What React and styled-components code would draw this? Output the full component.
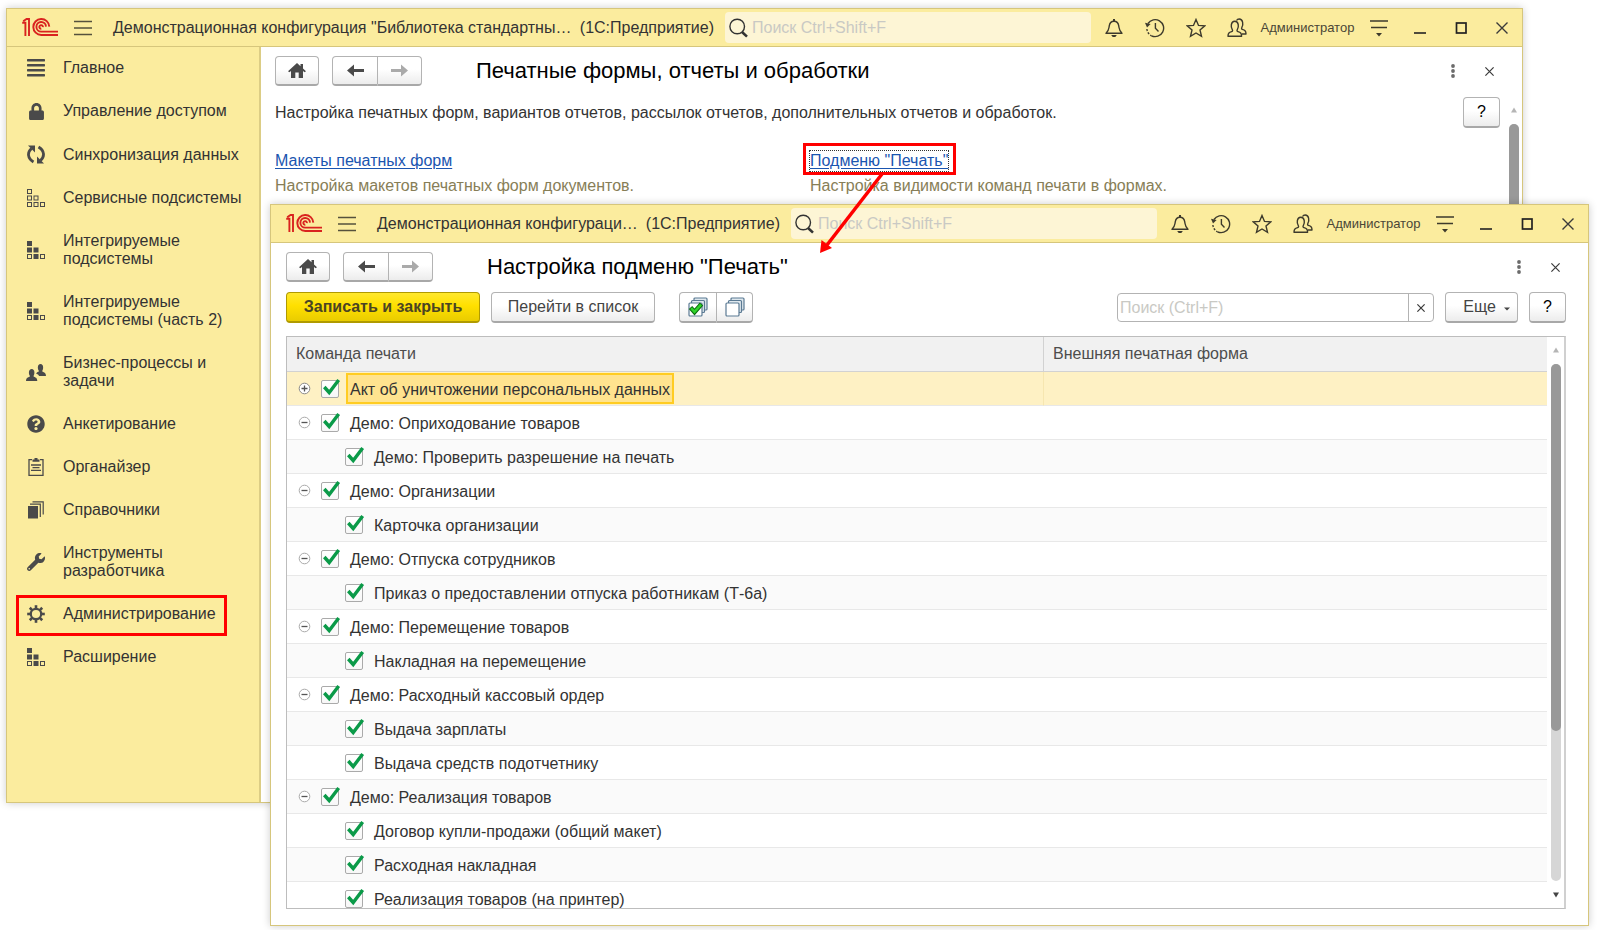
import { useState } from "react";
import styled, { createGlobalStyle } from "styled-components";
import { FaLock, FaWrench, FaQuestionCircle } from "react-icons/fa";

const GlobalStyle = createGlobalStyle`
  * {
    box-sizing: border-box;
  }
  body {
    margin: 0;
    background: #fff;
    color: #333;
    font-family: "Liberation Sans", Arial, sans-serif;
    font-size: 16px;
  }
  button, input {
    font: inherit;
    color: inherit;
  }
  svg {
    flex: none;
  }
`;

const Desktop = styled.div`
  position: relative;
  min-height: 100vh;
  overflow: hidden;
`;

const Window = styled.section`
  position: absolute;
  top: ${(props) => props.$top}px;
  right: ${(props) => props.$right}px;
  bottom: ${(props) => props.$bottom}px;
  left: ${(props) => props.$left}px;
  display: flex;
  flex-direction: column;
  background: #fff;
  border: 1px solid #d6c67c;
  box-shadow: 0 0 8px rgba(0, 0, 0, 0.2);
`;

const TitleBar = styled.header`
  display: flex;
  flex: none;
  align-items: center;
  height: 38px;
  padding-left: 15px;
  background: #fbec9e;
  border-bottom: 1px solid #d6c67c;
`;

const MenuButton = styled.button`
  display: flex;
  margin-left: 16px;
  padding: 0;
  background: none;
  border: none;
  cursor: pointer;
`;

const Caption = styled.div`
  display: flex;
  flex: 1;
  justify-content: space-between;
  gap: 6px;
  min-width: 0;
  padding: 0 11px 0 21px;
  white-space: nowrap;
`;

const GlobalSearch = styled.label`
  display: flex;
  flex: none;
  align-items: center;
  gap: 4px;
  width: 366px;
  height: 31px;
  margin-right: 2px;
  padding: 0 4px;
  background: #fdf5d5;
  border-radius: 4px;
`;

const SearchInput = styled.input`
  flex: 1;
  min-width: 0;
  padding: 0;
  background: none;
  border: none;
  outline: none;
  &::placeholder {
    color: #c9c9c4;
    opacity: 1;
  }
`;

const BarButton = styled.button`
  display: flex;
  flex: none;
  align-items: center;
  justify-content: center;
  width: 41px;
  height: 36px;
  padding: 0;
  background: none;
  border: none;
  cursor: pointer;
`;

const UserName = styled.span`
  width: 101px;
  text-align: center;
  font-size: 13px;
  color: #4a4636;
`;

const Body = styled.div`
  display: flex;
  flex: 1;
  min-height: 0;
`;

const Sidebar = styled.nav`
  flex: none;
  width: 254px;
  background: #fbec9e;
  border-right: 2px solid #dccd85;
`;

const SidebarItem = styled.a`
  position: relative;
  display: flex;
  align-items: center;
  gap: 18px;
  padding: 12px 12px 13px 20px;
  line-height: 18px;
  color: #333;
  text-decoration: none;
  white-space: pre-line;
`;

const SidebarIcon = styled.span`
  display: flex;
  flex: none;
  justify-content: center;
  width: 18px;
  color: #4a4a4a;
`;

const SidebarMark = styled.span`
  position: absolute;
  top: 2px;
  left: 9px;
  width: 211px;
  height: 41px;
  border: 3px solid #f00;
`;

const Page = styled.main`
  display: flex;
  flex: 1;
  flex-direction: column;
  min-width: 0;
  min-height: 0;
  padding: 9px 0 0 ${(props) => props.$indent}px;
`;

const PageHead = styled.div`
  display: flex;
  flex: none;
  align-items: center;
  height: 30px;
  padding-right: 15px;
`;

const Button = styled.button`
  display: flex;
  flex: none;
  align-items: center;
  justify-content: center;
  width: ${(props) => props.$width}px;
  height: ${(props) => props.$height || 31}px;
  padding: 0;
  background: linear-gradient(#fff 45%, #ececec);
  border: 1px solid #b3b3b3;
  border-bottom: 2px solid #a8a8a8;
  border-radius: 4px;
  color: #444;
  cursor: pointer;
`;

const PrimaryButton = styled(Button)`
  background: linear-gradient(#ffe82e, #ffe000 45%, #e9cc00);
  border-color: #b09a00;
  font-weight: bold;
  color: #4a4424;
`;

const HelpButton = styled(Button)`
  color: #000;
`;

const ButtonGroup = styled.div`
  display: flex;
  flex: none;
  margin-left: ${(props) => props.$gap}px;

  ${Button}:first-child {
    border-right-width: 1px;
    border-radius: 4px 0 0 4px;
  }
  ${Button}:last-child {
    border-left: none;
    border-radius: 0 4px 4px 0;
  }
`;

const PageTitle = styled.h1`
  flex: 1;
  margin: 0 0 0 54px;
  font-size: 22px;
  font-weight: normal;
  color: #000;
`;

const PlainButton = styled.button`
  display: flex;
  align-items: center;
  justify-content: center;
  width: 36px;
  height: 30px;
  padding: 0;
  background: none;
  border: none;
  cursor: pointer;
`;

const SettingsArea = styled.div`
  display: flex;
  flex: 1;
  gap: 5px;
  min-height: 0;
  padding-top: 11px;
`;

const Settings = styled.div`
  flex: 1;
`;

const Intro = styled.p`
  margin: 0;
  line-height: 32px;
`;

const SettingsGrid = styled.div`
  display: grid;
  grid-template-columns: 535px 1fr;
  margin-top: 22px;
`;

const Hint = styled.p`
  margin: 5px 0 0;
  line-height: 20px;
  color: #877e57;
`;

const SettingsLink = styled.a`
  display: inline-block;
  line-height: 20px;
  color: #1a55b0;
  text-decoration: underline;
  text-underline-offset: 2px;
  outline: ${(props) => (props.$focused ? "1px dotted #333" : "none")};
`;

const ScrollBar = styled.div`
  display: flex;
  flex: none;
  flex-direction: column;
  align-items: center;
  width: 17px;
  padding: 10px 0;
`;

const Track = styled.div`
  display: flex;
  flex: 1;
  width: 10px;
  margin: 11px 0;
  background: #d6d6d6;
  border-radius: 5px;
`;

const Thumb = styled.div`
  width: 10px;
  height: ${(props) => props.$size};
  background: #999;
  border-radius: 5px;
`;

const FormArea = styled.div`
  display: flex;
  flex: 1;
  flex-direction: column;
  min-height: 0;
  padding: 10px 22px 16px 0;
`;

const CommandBar = styled.div`
  display: flex;
  flex: none;
  align-items: center;
  gap: 11px;
  margin-bottom: 13px;
`;

const Spacer = styled.div`
  flex: 1;
`;

const ListSearch = styled.div`
  display: flex;
  width: 317px;
  height: 29px;
  padding-left: 2px;
  border: 1px solid #b3b3b3;
  border-radius: 4px;
`;

const ClearButton = styled.button`
  display: flex;
  align-items: center;
  justify-content: center;
  width: 25px;
  padding: 0;
  background: none;
  border: none;
  border-left: 1px solid #b3b3b3;
  cursor: pointer;
`;

const MoreText = styled.span`
  margin: 0 8px 0 10px;
`;

const TableFrame = styled.div`
  display: flex;
  flex: 1;
  min-height: 0;
  border: 1px solid #bdbdbd;
  border-right: 2px solid #d0d0d0;
`;

const TableView = styled.div`
  flex: 1;
  overflow: hidden;
`;

const Table = styled.table`
  width: 100%;
  border-spacing: 0;
  table-layout: fixed;
`;

const HeadCell = styled.th`
  width: ${(props) => props.$width};
  height: 35px;
  padding: 0 0 0 9px;
  background: #f1f1f1;
  border-bottom: 1px solid #d2d2d2;
  border-left: ${(props) => (props.$divided ? "1px solid #d2d2d2" : "none")};
  font-weight: normal;
  text-align: left;
  color: #4d4d4d;
`;

const Row = styled.tr`
  background: ${(props) => (props.$selected ? "#fef1c4" : "#fff")};
  &:nth-child(odd) {
    background: ${(props) => (props.$selected ? "#fef1c4" : "#fafafa")};
  }
`;

const Cell = styled.td`
  height: 34px;
  padding: 0;
  border-bottom: 1px solid #e8e8e8;
  border-left: ${(props) => (props.$divided ? "1px solid #f6e6b0" : "none")};
`;

const TreeLine = styled.div`
  display: flex;
  align-items: center;
  padding-left: ${(props) => (props.$child ? 58 : 11)}px;
`;

const ExpandButton = styled.button`
  display: flex;
  margin-right: 10px;
  padding: 0;
  background: none;
  border: none;
  cursor: pointer;
`;

const CheckLabel = styled.label`
  display: flex;
  align-items: center;
  gap: 7px;
`;

const CheckBoxWrap = styled.span`
  position: relative;
  display: flex;
  width: 18px;
  height: 18px;
`;

const CheckBox = styled.input`
  appearance: none;
  width: 18px;
  height: 18px;
  margin: 0;
  background: linear-gradient(#fff, #f7f7f7);
  border: 1px solid #aaa;
  border-radius: 2px;
`;

const CheckMark = styled.svg`
  position: absolute;
  top: -2px;
  left: 1px;
  pointer-events: none;
`;

const CommandName = styled.span`
  height: 31px;
  padding: 0 2px;
  line-height: 29px;
  background: ${(props) => (props.$selected ? "#ffe38f" : "transparent")};
  border: 2px solid ${(props) => (props.$selected ? "#fc2" : "transparent")};
`;

const Pointer = styled.svg`
  position: absolute;
  top: 143px;
  left: 803px;
  pointer-events: none;
`;

const Logo = () => (
    <svg width="36" height="19" viewBox="0 0 36 19" fill="none" stroke="#d9231f" strokeWidth="1.9">
        <path d="M0.2 4.7H3.4V18M1.2 3.3L4.6 1H7V18" />
        <path d="M27.3 8.6A8 8 0 1 0 19.3 17H36" />
        <path d="M24 8.6A4.8 4.8 0 1 0 19.3 13.6H36" />
        <path d="M20.9 9.2A1.8 1.8 0 1 0 19.3 10.7" />
    </svg>
);

const BurgerIcon = () => (
    <svg width="18" height="16" viewBox="0 0 18 16" stroke="#55513c" strokeWidth="1.3">
        <path d="M0 1.5H18M0 8H18M0 14.5H18" />
    </svg>
);

const SearchIcon = () => (
    <svg width="19" height="20" viewBox="0 0 19 20" fill="none" stroke="#333">
        <circle cx="8.2" cy="8.5" r="7.3" strokeWidth="1.4" />
        <path d="M13 14L18 18.6" strokeWidth="2.6" />
    </svg>
);

const BellIcon = () => (
    <svg width="18" height="20" viewBox="0 0 18 20" fill="none" stroke="#3d3a2c" strokeWidth="1.4">
        <path d="M1 15.2H17C14 12.8 14.3 11 13.7 7.6C13.2 4.6 11.5 3.2 9 3.2S4.8 4.6 4.3 7.6C3.7 11 4 12.8 1 15.2Z" strokeLinejoin="round" />
        <path d="M9 3V1" strokeWidth="2" />
        <path d="M6.2 17H11.8L10.3 18.9H7.7Z" fill="#3d3a2c" stroke="none" />
    </svg>
);

const HistoryIcon = () => (
    <svg width="20" height="20" viewBox="0 0 20 20" fill="none" stroke="#3d3a2c" strokeWidth="1.4">
        <path d="M3 5.5A8.5 8.5 0 1 1 6.5 17.8" />
        <path d="M1.9 11A8.5 8.5 0 0 0 6.5 17.8" strokeDasharray="2 1.5" />
        <path d="M10.4 5V10.3L13.5 13.4" />
        <path d="M0 4.8L5.6 6L2 9.5Z" fill="#3d3a2c" stroke="none" />
    </svg>
);

const StarIcon = () => (
    <svg width="20" height="20" viewBox="0 0 20 20" fill="none" stroke="#3d3a2c" strokeWidth="1.4">
        <path d="M10 1.5L12.5 7.4L18.8 7.9L14 12L15.5 18.3L10 15L4.5 18.3L6 12L1.2 7.9L7.5 7.4Z" />
    </svg>
);

const UsersIcon = () => (
    <svg width="20" height="20" viewBox="0 0 20 20" fill="none" stroke="#3d3a2c" strokeWidth="1.4" strokeLinejoin="round">
        <path d="M1 18.2C1 14.5 2.5 14.3 5.2 13.4C5.9 12.7 5.6 12 5.2 11.4C3.8 9.5 3.5 3.2 7.8 3.2S11.8 9.5 10.4 11.4C10 12 9.7 12.7 10.4 13.4C13.1 14.3 14.6 14.5 14.6 18.2Z" />
        <path d="M9.5 2.5C10.2 1.3 11 1 12.2 1C16.2 1 16.3 6.5 15 9C14.5 10 14.2 10.7 14.9 11.3C17.5 12.2 19 12.5 19 16H15" />
    </svg>
);

const OptionsIcon = () => (
    <svg width="18" height="18" viewBox="0 0 18 18" stroke="#3d3a2c" strokeWidth="1.4">
        <path d="M0 2H18M1 8.5H17" />
        <path d="M6 14H12L9 17.5Z" fill="#3d3a2c" stroke="none" />
    </svg>
);

const MinimizeIcon = () => (
    <svg width="12" height="12" viewBox="0 0 12 12" stroke="#222" strokeWidth="1.6">
        <path d="M0 11H12" />
    </svg>
);

const MaximizeIcon = () => (
    <svg width="12" height="12" viewBox="0 0 12 12" fill="none" stroke="#222" strokeWidth="1.7">
        <rect x="1.5" y="1" width="9.5" height="10" />
    </svg>
);

const CrossIcon = ({ size = 12, width = 1.4 }) => (
    <svg width={size} height={size} viewBox="0 0 12 12" stroke="#3a3a3a" strokeWidth={width}>
        <path d="M0.5 0.5L11.5 11.5M11.5 0.5L0.5 11.5" />
    </svg>
);

const DotsIcon = () => (
    <svg width="4" height="14" viewBox="0 0 4 14" fill="#6b6b6b">
        <circle cx="2" cy="2" r="1.9" />
        <circle cx="2" cy="7" r="1.9" />
        <circle cx="2" cy="12" r="1.9" />
    </svg>
);

const HomeIcon = () => (
    <svg width="18" height="15" viewBox="0 0 18 15" fill="#4a4a4a">
        <path d="M9 0L12.5 3.2V1H15V5.5L18 8.3L16.6 9.2L15 8V15H10.7V9.5H7.3V15H3V8L1.4 9.2L0 8.3Z" />
    </svg>
);

const ArrowIcon = ({ right }) => (
    <svg width="17" height="13" viewBox="0 0 17 13" fill={right ? "#aaa" : "#4a4a4a"}>
        <path d={right ? "M17 6.5L10 0.5V4.9H0V8.1H10V12.5Z" : "M0 6.5L7 0.5V4.9H17V8.1H7V12.5Z"} />
    </svg>
);

const TriangleIcon = ({ down, color }) => (
    <svg width="6" height="6" viewBox="0 0 6 6" fill={color}>
        <path d={down ? "M0 0.5H6L3 5.5Z" : "M0 5.5H6L3 0.5Z"} />
    </svg>
);

const CaretIcon = () => (
    <svg width="6" height="8" viewBox="0 0 6 8" fill="#444">
        <path d="M0 4.5H6L3 7.5Z" />
    </svg>
);

const StackIcon = ({ checked }) => (
    <svg width="20" height="20" viewBox="0 0 20 20" fill="#dfe8ee" stroke="#5b7a93" strokeWidth="1.2">
        <rect x="6" y="1" width="13" height="12" rx="1" />
        <rect x="3.5" y="3.5" width="13" height="12" rx="1" />
        <rect x="1" y="6" width="13" height="13" rx="1" fill="#fff" />
        {checked && <path d="M2.5 10.5L6.5 15L13.5 7" fill="none" stroke="#0a6b10" strokeWidth="4.6" />}
        {checked && <path d="M3.1 11.1L6.5 14.8L13 7.6" fill="none" stroke="#2fd32a" strokeWidth="2.6" />}
    </svg>
);

const LinesIcon = () => (
    <svg width="18" height="18" viewBox="0 0 18 18" fill="#4a4a4a">
        <rect y="0" width="18" height="2.4" rx="0.6" />
        <rect y="5" width="18" height="2.4" rx="0.6" />
        <rect y="10" width="18" height="2.4" rx="0.6" />
        <rect y="15" width="18" height="2.4" rx="0.6" />
    </svg>
);

const SyncIcon = () => (
    <svg width="18" height="19" viewBox="0 0 18 19" fill="none" stroke="#4a4a4a" strokeWidth="2.8">
        <path d="M6.5 17C0.5 13.5 0 7.5 4.5 3.5" />
        <path d="M11.5 2C17.5 5.5 18 11.5 13.5 15.5" />
        <path d="M1 0.5H8V7.5Z" fill="#4a4a4a" stroke="none" />
        <path d="M17 18.5H10V11.5Z" fill="#4a4a4a" stroke="none" />
    </svg>
);

const BlocksIcon = ({ solid }) => {
    const blocks = [
        [0, 0, solid],
        [0, 1, solid],
        [1, 1, solid],
        [0, 2, false],
        [1, 2, solid],
        [2, 2, false],
    ];
    return (
        <svg width="18" height="18" viewBox="0 0 18 18" stroke="#4a4a4a" strokeWidth="1">
            {blocks.map(([col, row, filled]) => (
                <rect
                    key={`${col}-${row}`}
                    x={col * 6.5 + 0.5}
                    y={row * 6.5 + 0.5}
                    width="4"
                    height="4"
                    fill={filled ? "#4a4a4a" : "none"}
                />
            ))}
        </svg>
    );
};

const PeopleIcon = () => (
    <svg width="20" height="17" viewBox="0 0 20 17" fill="#4a4a4a">
        <path d="M11 8.5C11.5 7.8 13 7.7 13 7C11.5 5.5 11 0 14.5 0S17.5 5.5 16.2 7C16.2 8.5 20 7.500 20 12H13C12.500 10.500 11.500 10 10 9.500Z" />
        <path d="M0 17C0 12.500 4 13.500 4 12C2.500 10.500 2.200 5 5.700 5S8.800 10.500 7.500 12C7.500 13.500 11.300 12.500 11.300 17Z" />
    </svg>
);

const ClipboardIcon = () => (
    <svg width="16" height="18" viewBox="0 0 16 18" fill="none" stroke="#4a4a4a" strokeWidth="1.3">
        <path d="M4 1.7H1V17.3H15V1.7H12" />
        <path d="M4.5 3.8V1.5H6.5V0H9.5V1.5H11.5V3.8Z" fill="#4a4a4a" stroke="none" />
        <path d="M3 7H13M4.5 9.7H11.5M3 12.4H13" />
    </svg>
);

const BooksIcon = () => (
    <svg width="16" height="18" viewBox="0 0 16 18" fill="none" stroke="#4a4a4a" strokeWidth="1.2">
        <rect x="0" y="5" width="10" height="12.5" fill="#4a4a4a" stroke="none" />
        <path d="M2 3.2H12.3V16M4.5 0.8H15.2V13.5" />
    </svg>
);

const GearIcon = () => (
    <svg width="18" height="18" viewBox="-9 -9 18 18" fill="none" stroke="#4a4a4a">
        <circle r="5.2" strokeWidth="2.2" />
        {[0, 45, 90, 135, 180, 225, 270, 315].map((angle) => (
            <path key={angle} d="M0 -5.5V-8.8" strokeWidth="2.6" transform={`rotate(${angle})`} />
        ))}
    </svg>
);

const ExpandIcon = ({ open }) => (
    <svg width="13" height="13" viewBox="0 0 13 13" fill="#fff" stroke={open ? "#aaa" : "#8a8a8a"}>
        <circle cx="6.5" cy="6.5" r="5.3" />
        <path d={open ? "M3.5 6.5H9.5" : "M3.5 6.5H9.5M6.5 3.5V9.5"} stroke="#555" strokeWidth="1.3" />
    </svg>
);

const sections = [
    { title: "Главное", icon: <LinesIcon /> },
    { title: "Управление доступом", icon: <FaLock size={17} /> },
    { title: "Синхронизация данных", icon: <SyncIcon /> },
    { title: "Сервисные подсистемы", icon: <BlocksIcon /> },
    { title: "Интегрируемые\nподсистемы", icon: <BlocksIcon solid /> },
    { title: "Интегрируемые\nподсистемы (часть 2)", icon: <BlocksIcon solid /> },
    { title: "Бизнес-процессы и\nзадачи", icon: <PeopleIcon /> },
    { title: "Анкетирование", icon: <FaQuestionCircle size={18} /> },
    { title: "Органайзер", icon: <ClipboardIcon /> },
    { title: "Справочники", icon: <BooksIcon /> },
    { title: "Инструменты\nразработчика", icon: <FaWrench size={18} /> },
    { title: "Администрирование", icon: <GearIcon />, marked: true },
    { title: "Расширение", icon: <BlocksIcon solid /> },
];

const commands = [
    { name: "Акт об уничтожении персональных данных", group: true, selected: true },
    { name: "Демо: Оприходование товаров", group: true, open: true },
    { name: "Демо: Проверить разрешение на печать" },
    { name: "Демо: Организации", group: true, open: true },
    { name: "Карточка организации" },
    { name: "Демо: Отпуска сотрудников", group: true, open: true },
    { name: "Приказ о предоставлении отпуска работникам (Т-6а)" },
    { name: "Демо: Перемещение товаров", group: true, open: true },
    { name: "Накладная на перемещение" },
    { name: "Демо: Расходный кассовый ордер", group: true, open: true },
    { name: "Выдача зарплаты" },
    { name: "Выдача средств подотчетнику" },
    { name: "Демо: Реализация товаров", group: true, open: true },
    { name: "Договор купли-продажи (общий макет)" },
    { name: "Расходная накладная" },
    { name: "Реализация товаров (на принтер)" },
];

const WindowTitle = ({ caption }) => (
    <TitleBar>
        <Logo />
        <MenuButton aria-label="Меню">
            <BurgerIcon />
        </MenuButton>
        <Caption>
            <span>{caption}</span>
            <span>(1С:Предприятие)</span>
        </Caption>
        <GlobalSearch>
            <SearchIcon />
            <SearchInput aria-label="Поиск" placeholder="Поиск Ctrl+Shift+F" />
        </GlobalSearch>
        <BarButton aria-label="Уведомления"><BellIcon /></BarButton>
        <BarButton aria-label="История"><HistoryIcon /></BarButton>
        <BarButton aria-label="Избранное"><StarIcon /></BarButton>
        <BarButton aria-label="Пользователи"><UsersIcon /></BarButton>
        <UserName>Администратор</UserName>
        <BarButton aria-label="Настройки"><OptionsIcon /></BarButton>
        <BarButton aria-label="Свернуть"><MinimizeIcon /></BarButton>
        <BarButton aria-label="Развернуть"><MaximizeIcon /></BarButton>
        <BarButton aria-label="Закрыть"><CrossIcon /></BarButton>
    </TitleBar>
);

const PageHeader = ({ title }) => (
    <PageHead>
        <Button $width={44} $height={30} aria-label="Домой"><HomeIcon /></Button>
        <ButtonGroup $gap={13}>
            <Button $width={46} $height={30} aria-label="Назад"><ArrowIcon /></Button>
            <Button $width={44} $height={30} aria-label="Вперед"><ArrowIcon right /></Button>
        </ButtonGroup>
        <PageTitle>{title}</PageTitle>
        <PlainButton aria-label="Еще"><DotsIcon /></PlainButton>
        <PlainButton aria-label="Закрыть"><CrossIcon size={9} width={1.6} /></PlainButton>
    </PageHead>
);

const CommandRow = ({ command }) => {
    const [checked, setChecked] = useState(true);

    return (
        <Row $selected={command.selected}>
            <Cell>
                <TreeLine $child={!command.group}>
                    {command.group && (
                        <ExpandButton aria-label={command.open ? "Свернуть" : "Развернуть"}>
                            <ExpandIcon open={command.open} />
                        </ExpandButton>
                    )}
                    <CheckLabel>
                        <CheckBoxWrap>
                            <CheckBox
                                type="checkbox"
                                checked={checked}
                                onChange={(e) => setChecked(e.target.checked)}
                            />
                            {checked && (
                                <CheckMark width="19" height="18" viewBox="0 0 19 18">
                                    <path d="M2.3 9L7.2 14.5L16.7 2" fill="none" stroke="#0a9a48" strokeWidth="3.4" />
                                </CheckMark>
                            )}
                        </CheckBoxWrap>
                        <CommandName $selected={command.selected}>{command.name}</CommandName>
                    </CheckLabel>
                </TreeLine>
            </Cell>
            <Cell $divided={command.selected} />
        </Row>
    );
};

const App = () => {
    return (
        <Desktop>
            <GlobalStyle />
            <Window $top={8} $right={75} $bottom={127} $left={6}>
                <WindowTitle caption={'Демонстрационная конфигурация "Библиотека стандартны…'} />
                <Body>
                    <Sidebar>
                        {sections.map((section) => (
                            <SidebarItem href="#" key={section.title}>
                                <SidebarIcon>{section.icon}</SidebarIcon>
                                {section.title}
                                {section.marked && <SidebarMark />}
                            </SidebarItem>
                        ))}
                    </Sidebar>
                    <Page $indent={14}>
                        <PageHeader title="Печатные формы, отчеты и обработки" />
                        <SettingsArea>
                            <Settings>
                                <Intro>
                                    Настройка печатных форм, вариантов отчетов, рассылок отчетов, дополнительных отчетов и обработок.
                                </Intro>
                                <SettingsGrid>
                                    <div>
                                        <SettingsLink href="#">Макеты печатных форм</SettingsLink>
                                        <Hint>Настройка макетов печатных форм документов.</Hint>
                                    </div>
                                    <div>
                                        <SettingsLink href="#" $focused>Подменю "Печать"</SettingsLink>
                                        <Hint>Настройка видимости команд печати в формах.</Hint>
                                    </div>
                                </SettingsGrid>
                            </Settings>
                            <HelpButton $width={37}>?</HelpButton>
                            <ScrollBar>
                                <TriangleIcon color="#b5b5b5" />
                                <Track>
                                    <Thumb $size="60%" />
                                </Track>
                                <TriangleIcon down color="#444" />
                            </ScrollBar>
                        </SettingsArea>
                    </Page>
                </Body>
            </Window>

            <Window $top={204} $right={9} $bottom={4} $left={270}>
                <WindowTitle caption="Демонстрационная конфигураци…" />
                <Page $indent={15}>
                    <PageHeader title={'Настройка подменю "Печать"'} />
                    <FormArea>
                        <CommandBar>
                            <PrimaryButton $width={194}>Записать и закрыть</PrimaryButton>
                            <Button $width={164}>Перейти в список</Button>
                            <ButtonGroup $gap={13}>
                                <Button $width={38} aria-label="Отметить все"><StackIcon checked /></Button>
                                <Button $width={36} aria-label="Снять отметки"><StackIcon /></Button>
                            </ButtonGroup>
                            <Spacer />
                            <ListSearch>
                                <SearchInput aria-label="Поиск" placeholder="Поиск (Ctrl+F)" />
                                <ClearButton aria-label="Очистить"><CrossIcon size={8} width={1.8} /></ClearButton>
                            </ListSearch>
                            <Button $width={73}>
                                <MoreText>Еще</MoreText>
                                <CaretIcon />
                            </Button>
                            <HelpButton $width={37}>?</HelpButton>
                        </CommandBar>
                        <TableFrame>
                            <TableView>
                                <Table>
                                    <thead>
                                        <tr>
                                            <HeadCell $width="60%">Команда печати</HeadCell>
                                            <HeadCell $divided>Внешняя печатная форма</HeadCell>
                                        </tr>
                                    </thead>
                                    <tbody>
                                        {commands.map((command) => (
                                            <CommandRow command={command} key={command.name} />
                                        ))}
                                    </tbody>
                                </Table>
                            </TableView>
                            <ScrollBar>
                                <TriangleIcon color="#b5b5b5" />
                                <Track>
                                    <Thumb $size="71%" />
                                </Track>
                                <TriangleIcon down color="#444" />
                            </ScrollBar>
                        </TableFrame>
                    </FormArea>
                </Page>
            </Window>

            {/* callout from the link to the window it opens */}
            <Pointer width="153" height="112" viewBox="0 0 153 112" fill="none" stroke="#f00" strokeWidth="3">
                <rect x="1.5" y="1.5" width="150" height="29" />
                <path d="M79 31L24 102" strokeWidth="3.5" />
                <path d="M17 110L18.5 97L29 105Z" fill="#f00" stroke="none" />
            </Pointer>
        </Desktop>
    );
};

export default App;
